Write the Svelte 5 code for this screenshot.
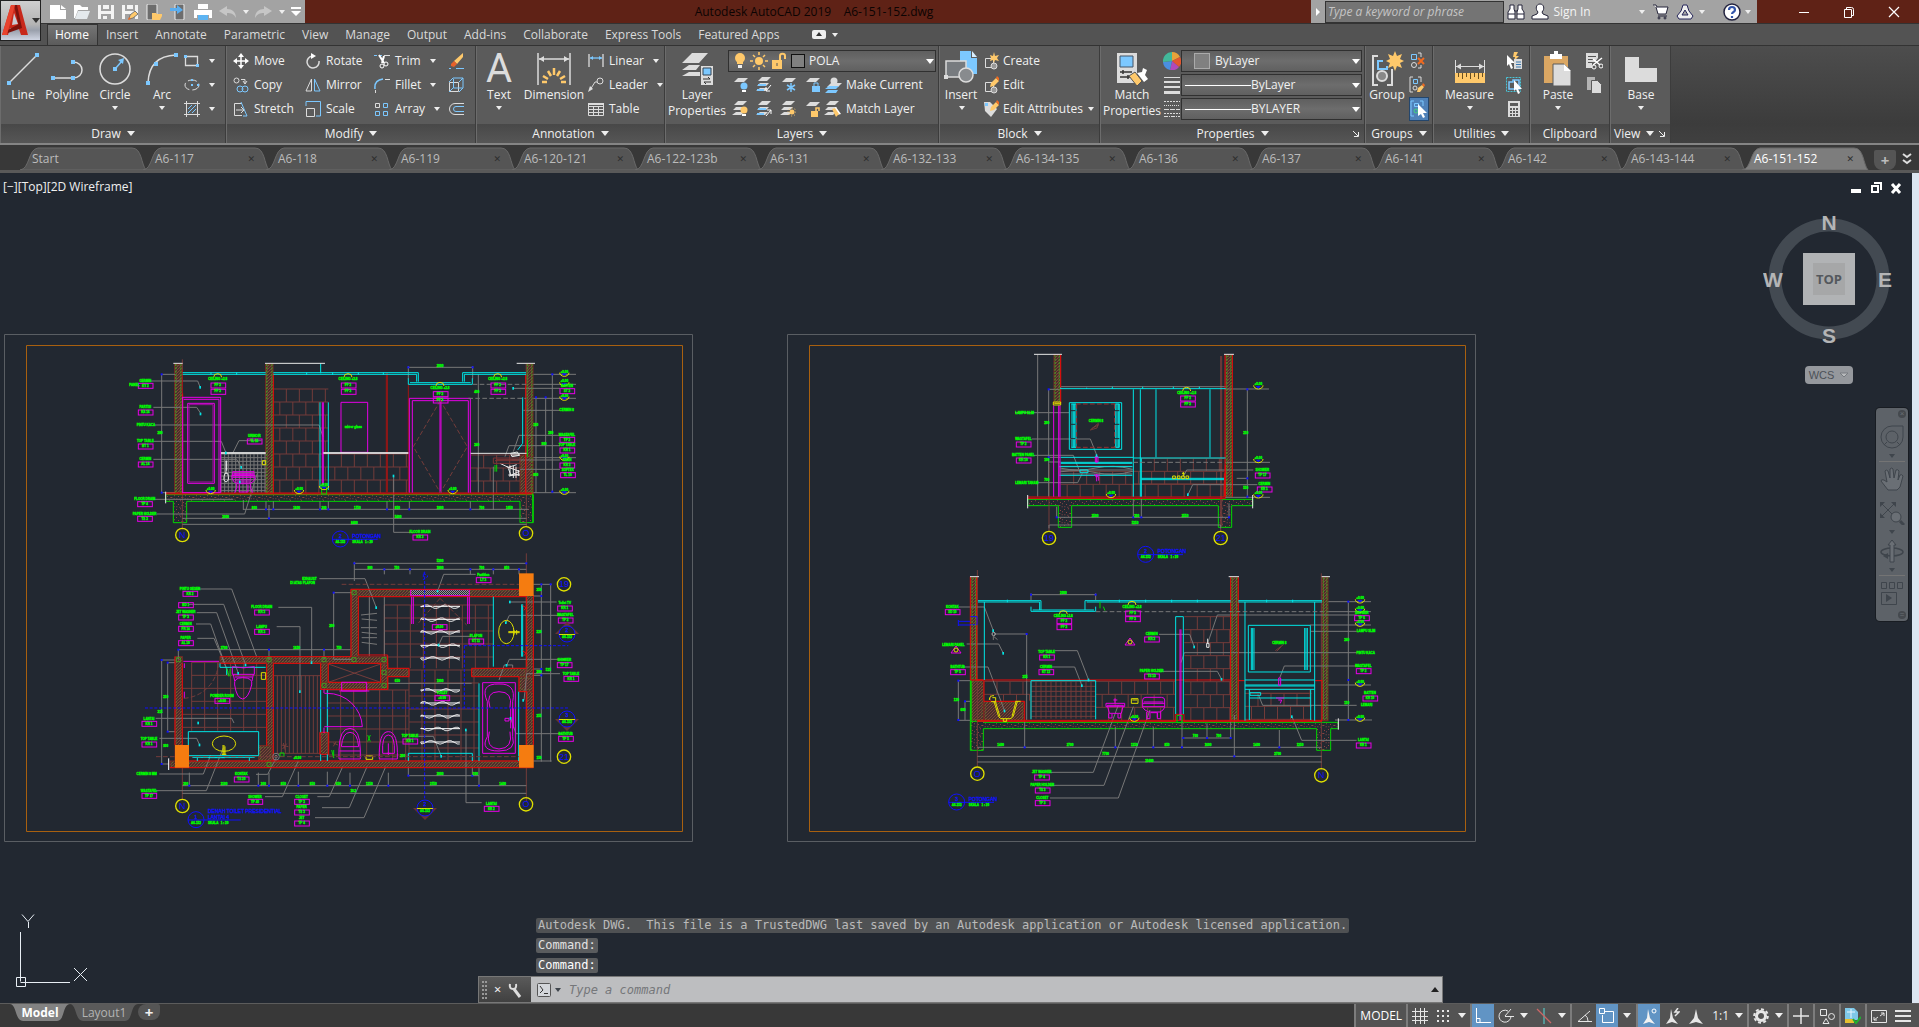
<script lang="ts">
    const W = '#dcdcdc';
    const B = '#7cc8ff';
    const Y = '#ffc96b';

    const menus = ['Home', 'Insert', 'Annotate', 'Parametric', 'View', 'Manage', 'Output', 'Add-ins', 'Collaborate', 'Express Tools', 'Featured Apps'];
    const files = ['Start', 'A6-117', 'A6-118', 'A6-119', 'A6-120-121', 'A6-122-123b', 'A6-131', 'A6-132-133', 'A6-134-135', 'A6-136', 'A6-137', 'A6-141', 'A6-142', 'A6-143-144', 'A6-151-152'];
    let activeMenu = 'Home';
    let activeFile = 'A6-151-152';
    let command = '';
    let keyword = '';

    const sheet = `<path fill="${W}" d="M6 1h10l-4 4H2z"/>`;
    const sheets = `<path fill="${W}" d="M6 0h9l-4 4H2zM4 6h9l-3 3H1zM4 11h8l-3 3H0z"/>`;

    // every icon: [width, height, svg body]
    const icons: Record<string, [number, number, string]> = {
        logo: [30, 34, `<path fill="#c8281a" d="M10 1h9l8 30h-7l-2-6-9-1-2 7H1z"/><path fill="#7e120c" d="M13 1h3l5 23-3-1zM3 28l15-8 3 4-17 6z"/><path fill="#c9ccd4" d="M13 9l4 11-6 1z"/><path fill="#e8432e" d="M10 1h4L6 31H1z"/>`],
        new: [18, 16, `<path fill="#fff" d="M1 1h10v5h6v9H1z"/><path fill="#fff" d="M12 1l5 4h-5z"/>`],
        open: [18, 16, `<path fill="#fff" d="M1 1h6l2 2h6v3H5L2 14H1z"/><path fill="#e4e9ec" d="M5 7h12l-3 8H2z"/>`],
        save: [18, 16, `<path fill="#f4f4f4" d="M1 1h3v6h10V1h3v14h-3v-5H4v5H1z"/><path fill="#f4f4f4" d="M6 1h6v4H6zM6 12h4v3H6z"/>`],
        saveas: [18, 16, `<path fill="#f4f4f4" d="M1 1h3v6h10V1h3v14h-3v-5H4v5H1zM6 1h6v4H6z"/><path fill="${Y}" stroke="#777" d="M8 15l1-4 5-4 3 3-5 4z"/><path fill="#f06a20" d="M7 16l1-3 2 2z"/>`],
        mobopen: [18, 16, `<rect x="2" width="10" height="16" rx="1" fill="#6d6d6d" stroke="#eee"/><path fill="${Y}" d="M7 9h4l1 1h5v2l-2 4H7z"/>`],
        mobsave: [18, 16, `<rect x="6" width="9" height="16" rx="1" fill="#6d6d6d" stroke="#eee"/><path fill="#5aaef0" d="M1 4h7V1l6 5-6 4V7H1z"/>`],
        print: [20, 16, `<path fill="#fff" d="M5 0h10v5H5zM1 6h18v8h-3v-3H4v3H1z"/><path fill="#5db4f2" d="M5 11h10v5H5z"/>`],
        undo: [18, 14, `<path fill="#c6c6c6" d="M0 6l8-5v3c5 0 9 3 9 9-2-4-5-5-9-5v3z"/>`],
        redo: [18, 14, `<path fill="#c6c6c6" d="M17 6L9 1v3c-5 0-9 3-9 9 2-4 5-5 9-5v3z"/>`],
        custom: [10, 10, `<path fill="#fff" d="M0 0h10v2H0zM0 4h10L5 9z"/>`],
        collapse: [14, 9, `<rect width="14" height="9" rx="2" fill="#eee"/><path fill="#333" d="M4 6l3-4 3 4z"/>`],
        binoc: [18, 16, `<path fill="#fff" stroke="#25253a" d="M3 1h4v4l1 3v7H1V8l2-3zM11 1h4v4l2 3v7h-7V8l1-3z"/><path stroke="#25253a" d="M1 10h7M10 10h7M8 7h2"/>`],
        person: [18, 17, `<path fill="#fff" stroke="#25253a" d="M6 11l1-2C4 6 5 1 9 1s5 5 2 8l1 2 5 2v3H1v-3z"/>`],
        cart: [17, 17, `<path fill="#fff" stroke="#25253a" d="M1 2h3l1 2h11l-2 7H6L4 4M6 13h9"/><circle cx="7" cy="15" r="1" stroke="#25253a"/><circle cx="13" cy="15" r="1" stroke="#25253a"/>`],
        a360: [20, 16, `<path fill="#eee" fill-rule="evenodd" stroke="#25255a" d="M8 1h4l2 6 4 5-2 3H4l-2-3 4-5zM10 6l-3 5h6z"/>`],
        help: [18, 18, `<circle cx="9" cy="9" r="8" fill="#fff" stroke="#23233f" stroke-width="1.5"/><path fill="none" stroke="#3355aa" stroke-width="2.2" d="M6 7c0-4 6-4 6 0 0 2-3 2-3 4v0M9 13v2"/>`],
        wmin: [14, 14, `<path stroke="#fff" d="M2 7.500h10"/>`],
        wmax: [14, 14, `<path fill="none" stroke="#fff" d="M2.500 4.500h7v8h-7zM4.500 4V2.500h5q2 0 2 2v6H10"/>`],
        wclose: [14, 14, `<path stroke="#fff" stroke-width="1.200" d="M2 2l10 10M12 2L2 12"/>`],
        line: [34, 34, `<path stroke="${W}" stroke-width="1.500" d="M3 31L31 3"/><path fill="${B}" d="M1 29h4v4H1zM29 1h4v4h-4z"/>`],
        pline: [34, 34, `<path fill="none" stroke="${W}" stroke-width="1.500" d="M3 26h20c12 0 12-16 0-16"/><path fill="${B}" d="M1 24h4v4H1zM21 24h4v4h-4zM21 8h4v4h-4z"/>`],
        circle: [34, 34, `<circle cx="17" cy="17" r="15" fill="none" stroke="${W}" stroke-width="1.500"/><path stroke="${B}" stroke-width="1.500" d="M17 17l7-8"/><path fill="${B}" d="M15 15h4v4h-4zM26 6l-1 6-5-4z"/>`],
        arc: [34, 34, `<path fill="none" stroke="${W}" stroke-width="1.500" d="M3 31Q4 4 31 3"/><path fill="${B}" d="M1 29h4v4H1zM9 10h4v4H9zM29 1h4v4h-4z"/>`],
        rect: [16, 14, `<path fill="none" stroke="${W}" stroke-width="1.300" d="M1.500 2.500h12v9h-12z"/><path fill="${B}" d="M0 1h3v3H0zM12 10h3v3h-3z"/>`],
        ellipse: [16, 14, `<ellipse cx="8" cy="7" rx="7" ry="5" fill="none" stroke="${W}" stroke-dasharray="9 3"/><path fill="${B}" d="M7 6h2v2H7zM7 1h2v2H7zM13 6h2v2h-2z"/>`],
        hatch: [16, 16, `<path fill="none" stroke="${W}" d="M0 2.500h16M0 13.500h16M2.500 0v16M13.500 0v16"/><path stroke="${B}" d="M4 8l4-4M4 12l8-8M8 12l4-4"/>`],
        move: [16, 16, `<path stroke="#fff" stroke-width="1.500" d="M8 2v12M2 8h12"/><path fill="#fff" d="M8 0l3 4H5zM8 16l3-4H5zM0 8l4-3v6zM16 8l-4-3v6z"/>`],
        rotate: [16, 16, `<path fill="none" stroke="${W}" stroke-width="1.500" d="M7 3a6 6 0 1 0 7 5"/><path fill="#fff" d="M6 0l5 3-5 3z"/>`],
        trim: [16, 16, `<path stroke="${B}" stroke-dasharray="3 2" d="M0 2.500h8"/><path stroke="${W}" d="M10 2.500h6"/><path stroke="#fff" stroke-width="2" d="M5 2l5 8M10 3L8 10"/><circle cx="8" cy="13" r="2" fill="none" stroke="#fff"/><circle cx="12" cy="11" r="2" fill="none" stroke="#fff"/>`],
        erase: [16, 16, `<path fill="${Y}" d="M15 0v4L9 11 6 8z"/><path fill="#e8622a" d="M6 8l3 3-3 3-3-1v-2z"/><path stroke="${B}" d="M1 15.500h2M8 15.500h8"/>`],
        copy: [16, 16, `<circle cx="3.500" cy="3.500" r="2.500" fill="none" stroke="${W}"/><path fill="none" stroke="${W}" d="M8 2.500h4V7M10 4l2 3 2-3"/><g fill="none" stroke="${B}"><circle cx="7" cy="12" r="3"/><circle cx="12" cy="12" r="3"/></g>`],
        mirror: [16, 16, `<path fill="none" stroke="${W}" d="M6.500 2v12H1z"/><path fill="none" stroke="${B}" d="M9.500 2v12H15z"/>`],
        fillet: [16, 16, `<path fill="none" stroke="${B}" stroke-width="1.500" d="M1 12Q0 3 9 2"/><path stroke="${W}" d="M11 2.500h5M1.500 13v3"/>`],
        cube: [16, 16, `<path fill="none" stroke="${W}" d="M1.500 5.500h9v9h-9z"/><path fill="none" stroke="${B}" d="M1 5l4-4h10v10l-4 4M11 5l4-4M5.500 2v9h9M1 15l4-4"/>`],
        stretch: [16, 16, `<path fill="none" stroke="${W}" d="M9 2.500H1.500v12H9M3 9h7M8 6l3 3-3 3"/><path fill="none" stroke="${B}" d="M8 1l6 14H10"/>`],
        scale: [16, 16, `<path fill="none" stroke="${B}" d="M1 5V.500h14.500V15H11"/><path fill="none" stroke="${W}" d="M1.500 7.500h8v8h-8z"/>`],
        array: [16, 16, `<path fill="none" stroke="${W}" d="M1.500 2.500h4v4h-4z"/><path fill="none" stroke="${B}" d="M9.500 2.500h4v4h-4zM1.500 10.500h4v4h-4zM9.500 10.500h4v4h-4z"/>`],
        offset: [16, 16, `<path fill="none" stroke="${W}" d="M16 2.500H7a5.500 5.500 0 0 0 0 11h9"/><path fill="none" stroke="${B}" d="M16 5.500H8a2.500 2.500 0 0 0 0 5h8"/>`],
        dim: [34, 34, `<path stroke="${W}" stroke-width="1.500" d="M1 1v32M33 1v32M2 7h30"/><path fill="${W}" d="M2 7l5-3v6zM32 7l-5-3v6z"/><path stroke="${Y}" stroke-width="2.500" d="M17 16v7M11 19l3 5M23 19l-3 5M6 24l5 3M28 24l-5 3M5 30h5M24 30h5"/>`],
        linear: [16, 16, `<path stroke="${W}" stroke-width="1.300" d="M1 1v13M15 1v13"/><path stroke="${B}" stroke-width="1.300" d="M2 5h12"/><path fill="${B}" d="M2 5l3-2v4zM14 5l-3-2v4z"/>`],
        leader: [16, 16, `<circle cx="12" cy="4" r="3" fill="none" stroke="${W}"/><path fill="none" stroke="${W}" d="M9 5H7L2 13"/><path fill="${W}" d="M0 15l2-6 3 3z"/>`],
        table: [16, 16, `<path fill="none" stroke="${W}" d="M.500 2.500h15v12H.500zM0 5.500h16M0 8.500h16M0 11.500h16M5.500 5v9M10.500 5v9"/><path fill="${W}" d="M0 2h16v2H0z"/>`],
        layers: [34, 34, `<path fill="${W}" d="M12 1h16l-9 10H2zM9 13h11l-4 5H2zM9 20h11v4H2z"/><path fill="${W}" d="M21 14h12v19H21z"/><path fill="${B}" stroke="#345" d="M23 16h8v7h-8z"/><path fill="none" stroke="#333" d="M23 27h7l-2-2M31 30h-7l2 2"/>`],
        bulb: [14, 18, `<circle cx="7" cy="6" r="5" fill="${Y}"/><path fill="${Y}" d="M4 8h6v4H4z"/><path fill="#eee" d="M5 13h4v3H5z"/>`],
        sun: [18, 18, `<circle cx="9" cy="9" r="4" fill="${Y}"/><path stroke="${Y}" stroke-width="1.500" d="M9 0v3M9 15v3M0 9h3M15 9h3M3 3l2 2M13 13l2 2M15 3l-2 2M3 15l2-2"/>`],
        unlock: [16, 18, `<path fill="${Y}" d="M1 8h10v9H1z"/><path fill="none" stroke="${Y}" stroke-width="2" d="M9 8V4c0-3 5-3 5 0v3"/><path stroke="#555" d="M6 11v3"/>`],
        l1: [16, 16, sheet + `<circle cx="12" cy="9" r="3.500" fill="${B}"/><path fill="#fff" d="M10 13h4v2h-4z"/>`],
        l2: [16, 16, sheets + `<path stroke="${B}" stroke-width="2" d="M1 13h7M2 8h8"/><path stroke="#fff" fill="none" d="M15 8l-5 6M10 10v4h4"/>`],
        l3: [16, 16, sheet + `<path stroke="${B}" stroke-width="1.500" d="M11 6v9M7 8l8 5M15 8l-8 5"/>`],
        l4: [16, 16, sheet + `<path fill="${B}" d="M8 9h8v6H8z"/><path fill="none" stroke="${B}" d="M10 9V6h4v3"/>`],
        l5: [18, 17, `<path fill="${W}" d="M7 6h11l-4 4H3z"/><circle cx="10" cy="4" r="3.500" fill="${W}"/><path fill="${B}" d="M5 9h10l-3 3H1zM4 13h10l-2 3H1z"/>`],
        l6: [16, 16, sheets + `<circle cx="12" cy="9" r="3.500" fill="${Y}"/><path fill="#fff" d="M10 13h4v2h-4z"/>`],
        l7: [16, 16, sheets + `<path stroke="${B}" stroke-width="2" d="M1 13h7M2 8h8"/><path stroke="#fff" fill="none" d="M10 15l5-6M11 9h4v4"/>`],
        l8: [16, 16, sheets + `<circle cx="12" cy="11" r="2.500" fill="${Y}"/><circle cx="12" cy="11" r="4" fill="none" stroke="${Y}" stroke-dasharray="1 2"/>`],
        l9: [16, 16, sheet + `<path fill="${Y}" d="M7 10h7v6H7z"/><path fill="none" stroke="${Y}" stroke-width="1.500" d="M12 10V7h3v3"/>`],
        l10: [18, 16, sheets + `<path fill="#fff" d="M9 8l3-2 5 7-4 1z"/><path fill="${Y}" d="M8 8l3-1 4 6-3 3z"/>`],
        insert: [34, 40, `<path fill="${B}" d="M16 2h11v7h6v16H16z"/><path fill="#d9efff" d="M28 2l5 6h-5z"/><path fill="#777b7f" stroke="${W}" stroke-width="1.500" d="M2 12h20v16H2z"/><circle cx="22" cy="26" r="7" fill="#888b8e" stroke="${W}" stroke-width="1.500"/><path fill="${W}" d="M0 26h4v4H0z"/>`],
        create: [16, 18, `<path fill="none" stroke="${W}" d="M2.500 6.500h8v9h-8z"/><circle cx="11" cy="14" r="3" fill="#999" stroke="${W}"/><path fill="${Y}" d="M11 0l1 4 4-1-2 3 2 3-4-1-1 3-1-3-3 1 1-3-1-3 3 1z"/>`],
        edit: [16, 18, `<path fill="none" stroke="${W}" d="M2.500 6.500h8v9h-8z"/><circle cx="11" cy="14" r="3" fill="#999" stroke="${W}"/><path fill="${Y}" d="M7 11l1-4 5-5 3 3-5 5z"/><path fill="#f06a20" d="M13 2l1-2 3 3-1 2z"/>`],
        attr: [16, 18, `<path fill="${W}" d="M1 2h6l7 7-6 8-6-6z"/><path fill="${B}" d="M2 3h3v3H2z"/><path fill="${Y}" d="M7 11l1-4 5-5 3 3-5 5z"/><path fill="#f06a20" d="M13 2l1-2 3 3-1 2z"/>`],
        match: [34, 34, `<path fill="${W}" d="M2 1h20v30H2z"/><path fill="${B}" stroke="#456" d="M5 4h13v11H5z"/><path stroke="#333" stroke-width="1.500" d="M5 20h12M5 25h12M8 18v4M13 23v4"/><path fill="${Y}" stroke="#555" d="M14 24l6-4 7 9-5 5z"/><path fill="#fff" d="M22 21l5-1 1-4 4 2-2 5 3 4-4 3z"/>`],
        wheel: [18, 18, `<path fill="#e9a23a" d="M9 9V0a9 9 0 0 1 8 5z"/><path fill="#e2572f" d="M9 9l8-4a9 9 0 0 1-1 10z"/><path fill="#b04ab8" d="M9 9l7 6a9 9 0 0 1-9 3z"/><path fill="#4a8fe0" d="M9 9l-2 9a9 9 0 0 1-7-8z"/><path fill="#42b89a" d="M9 9l-9 1A9 9 0 0 1 9 0z"/>`],
        weights: [16, 18, `<path fill="${W}" d="M0 1h16v1H0zM0 5h16v2H0zM0 10h16v2H0zM0 15h16v3H0z"/>`],
        types: [16, 16, `<path stroke="${W}" d="M0 .500h16M0 12.500h16" stroke-dasharray="2 1"/><path stroke="${W}" d="M0 4.500h16" stroke-dasharray="1 1"/><path stroke="${W}" d="M0 8.500h16" stroke-dasharray="5 1"/><path stroke="${W}" d="M0 15.500h16" stroke-dasharray="4 1 1 1"/>`],
        group: [34, 36, `<path fill="none" stroke="${W}" stroke-width="2" d="M8 5H3v29h5M17 34h5V18"/><path fill="none" stroke="${B}" stroke-width="2" d="M13 10H8v8h9v-3"/><circle cx="12" cy="25" r="5" fill="#888" stroke="${W}" stroke-width="2"/><path fill="${Y}" d="M25 0l2 5 5-2-2 5 4 2-4 2 2 5-5-2-2 5-2-5-5 2 2-5-4-2 4-2-2-5 5 2z"/>`],
        ungroup: [16, 18, `<path fill="none" stroke="${B}" d="M2.500 2.500h5v5h-5z"/><circle cx="5" cy="13" r="2.500" fill="none" stroke="${W}"/><path fill="none" stroke="${W}" d="M9 1h3v4M9 16h3v-3"/><path stroke="#f06a20" stroke-width="2" d="M9 6l6 6M15 6l-6 6"/>`],
        gedit: [16, 18, `<path fill="none" stroke="${W}" d="M4 1H1v15h3M9 1h3v5"/><path fill="none" stroke="${B}" d="M4.500 3.500h4v4h-4z"/><circle cx="6" cy="12" r="2" fill="none" stroke="${W}"/><path fill="${Y}" d="M8 16l1-4 4-3 2 2-4 5z"/><path fill="#f06a20" d="M13 9l1-2 2 2-1 2z"/>`],
        gsel: [18, 18, `<path fill="none" stroke="${B}" d="M4 1H1v15h3M10 1h3v5M4.500 3.500h4v3h-4z"/><circle cx="6" cy="11" r="2" fill="none" stroke="#45d080"/><path fill="#fff" d="M8 4l9 9h-4l2 4-2 1-2-4-3 2z"/>`],
        measure: [32, 34, `<path stroke="${W}" d="M1.500 8v16M30.500 8v16M2 14.500h28"/><path fill="${W}" d="M2 14.500l5-3v6zM30 14.500l-5-3v6z"/><path fill="${Y}" d="M1 21h30v10H1z"/><path stroke="#6a5020" d="M4.500 21v4M8.500 21v6M12.500 21v4M16.500 21v6M20.500 21v4M24.500 21v6M28.500 21v4"/>`],
        qsel: [18, 18, `<path fill="#fff" d="M2 3l8 8H6l2 5-2 1-2-5-2 2z"/><path fill="${Y}" d="M9 0h4l-2 4h3l-5 5 1-4H8z"/><path fill="${W}" d="M9 7h8v10H9z"/><path stroke="#3a78b0" d="M11 10h5M11 12.500h5M11 15h5"/>`],
        selall: [18, 18, `<path fill="none" stroke="#49c5d8" stroke-dasharray="2 1" d="M1.500 1.500h14v14h-14z"/><path fill="none" stroke="${B}" stroke-width="1.500" d="M4 6h4V4h6v9H4z"/><path fill="#fff" d="M9 4l8 9h-4l2 4-2 1-2-5-2 2z"/>`],
        calc: [14, 18, `<path fill="${W}" d="M1 1h12v16H1z"/><path fill="#5b5b5b" d="M3 3h8v3H3zM3 8h2v2H3zM6 8h2v2H6zM9 8h2v2H9zM3 11h2v2H3zM6 11h2v2H6zM9 11h2v2H9zM3 14h2v2H3zM6 14h2v2H6zM9 14h2v2H9z"/>`],
        paste: [32, 36, `<path fill="#dba763" d="M2 5h24v27H2z"/><path fill="#fff" d="M8 3h4V0h4v3h4v5H8z"/><path fill="${W}" stroke="#5b5b5b" d="M11 13h11l7 7v15H11z"/><path fill="#fff" d="M22 13l7 7h-7z"/>`],
        cut: [18, 18, `<path fill="${W}" d="M1 1h12v5l-3 4H7v6H1z"/><path stroke="#555" d="M3 4.500h8M3 7.500h6M3 10.500h4"/><path stroke="#fff" stroke-width="1.500" d="M8 13l9-7M8 7l7 6"/><circle cx="16" cy="14" r="2" fill="none" stroke="#fff"/><circle cx="9" cy="15" r="2" fill="none" stroke="#fff"/>`],
        copyclip: [16, 18, `<path fill="#b4b4b4" d="M1 1h8v13H1z"/><path fill="${W}" stroke="#5b5b5b" d="M5.500 4.500h6l4 4v9h-10z"/>`],
        base: [34, 34, `<path fill="${W}" d="M1 5h14v11h18v14H1z"/>`],
        diag: [8, 8, `<path fill="none" stroke="#eee" d="M1 1l5 5M6.500 2v4.500H2"/>`],
        wheelnav: [24, 24, `<path fill="none" stroke="#3f454c" d="M12 1h11v11a11 11 0 1 1-11-11z"/><circle cx="12" cy="12" r="6" fill="none" stroke="#3f454c"/><path stroke="#3f454c" d="M7 17l-3 3M17 17l3 3"/>`],
        hand: [24, 24, `<path fill="#6a6f75" stroke="#3f454c" d="M8 23l-7-9q0-2 3-1l3 2L5 4q1-2 3 0l2 7 0-9q2-2 3 0l1 9 2-8q2-1 3 1l-1 9 2-5q2-1 3 1l-3 11-3 3z"/>`],
        zoomnav: [26, 24, `<path stroke="#3f454c" d="M2 2l14 14M16 2L2 16"/><path fill="#3f454c" d="M1 1h5L1 6zM17 1v5l-5-5zM1 17v-5l5 5z"/><circle cx="17" cy="16" r="5" fill="#6a6f75" stroke="#3f454c"/><path stroke="#3f454c" stroke-width="3" d="M21 20l4 4"/>`],
        orbit: [24, 24, `<ellipse cx="12" cy="13" rx="11" ry="4" fill="none" stroke="#3f454c" stroke-width="1.500"/><path fill="#6a6f75" stroke="#3f454c" d="M10 23V6H8l4-5 4 5h-2v17z"/><path fill="#3f454c" d="M3 17l5-3v6z"/>`],
        motion: [24, 24, `<path fill="none" stroke="#3f454c" d="M1.500 1.500h5v6h-5zM9.500 1.500h5v6h-5zM17.500 1.500h5v6h-5zM1.500 11.500h15v12h-15z"/><path fill="#3f454c" d="M6 13l6 4-6 4z"/>`],
        wrench: [14, 16, `<path fill="none" stroke="#ddd" stroke-width="3" d="M6 7l6 8"/><path fill="none" stroke="#ddd" stroke-width="2" d="M2 2q-1 5 3 5t3-5"/>`],
        prompt: [14, 14, `<rect x=".500" y=".500" width="13" height="13" rx="1" fill="#d3d6da" stroke="#555"/><path fill="none" stroke="#333" d="M3 3l3 4-3 3M7 10.500h4"/>`],
        sgrid: [16, 16, `<path stroke="#e6e6e6" d="M0 3.500h16M0 8.500h16M0 12.500h16M3.500 0v16M8.500 0v16M12.500 0v16"/>`],
        ssnap: [16, 16, `<path stroke="#e6e6e6" stroke-width="2" stroke-dasharray="2 3" d="M1 3h13M1 8h13M1 13h13"/>`],
        sortho: [16, 16, `<path fill="none" stroke="#fff" d="M1.500 0v14.500H16M1 10.500h4V15"/>`],
        spolar: [16, 16, `<path fill="none" stroke="#e6e6e6" d="M10 3a6 6 0 1 0 3 5M7 8.500h9M7 8l6-7"/>`],
        siso: [16, 16, `<path stroke="#5bb" stroke-width="1.300" d="M8 0v16"/><path stroke="#c66" stroke-width="1.300" d="M1 1l14 14"/>`],
        strack: [16, 16, `<path fill="none" stroke="#e6e6e6" d="M14 3L2 13.500h14M9 7q3 2 3 6"/>`],
        sosnap: [16, 16, `<path fill="none" stroke="#fff" d="M6 3.500h8.500v11h-11V7M.500.500h5v5h-5z"/>`],
        sann: [16, 16, `<path fill="#f2f2f2" d="M7 1l2 9 5 6-6-2-6 2 4-6z"/><circle cx="13" cy="3" r="2" fill="none" stroke="#fff"/>`],
        sann2: [16, 16, `<path fill="#e6e6e6" d="M7 1l2 9 5 6-6-2-6 2 4-6z"/><path stroke="#e6e6e6" stroke-width="1.500" d="M14 0l-3 4h4l-4 4"/>`],
        sann3: [16, 16, `<path fill="#e6e6e6" d="M8 1l2 9 5 6-7-2-7 2 5-6z"/>`],
        gear: [16, 16, `<circle cx="8" cy="8" r="4.500" fill="none" stroke="#e6e6e6" stroke-width="3"/><circle cx="8" cy="8" r="6.800" fill="none" stroke="#e6e6e6" stroke-width="2" stroke-dasharray="3 2.300"/>`],
        plus: [16, 16, `<path stroke="#e6e6e6" stroke-width="1.500" d="M8 0v16M0 8h16"/>`],
        isolate: [16, 16, `<path fill="none" stroke="#e6e6e6" d="M1.500 1.500h6v6h-6zM4 15.500l3-5 3 5z"/><circle cx="12.500" cy="8.500" r="3" fill="none" stroke="#e6e6e6"/>`],
        perf: [16, 16, `<path fill="#7ec8e8" d="M0 0h9l4 4v8H0z"/><path stroke="#e8f6ff" d="M2 4h8M6 1v9"/><path fill="#e6c030" d="M0 11h9v4H0z"/><path fill="none" stroke="#20b030" stroke-width="2" d="M8 11l3 4 5-6"/>`],
        full: [16, 16, `<path fill="none" stroke="#e6e6e6" d="M.500 2.500h15v12H.500zM10 5h3v3M13 5L9 8M3 9v3h3M3 12l4-3"/>`],
        lines: [16, 16, `<path stroke="#e6e6e6" stroke-width="2" d="M0 3h16M0 8h16M0 13h16"/>`],
    };

    // ---- model space -------------------------------------------------
    // drawing units are a third of a pixel, measured from each view's corner
    const GREY = '#777777', BROWN = '#743c3a', RED = '#e60a0a', GREEN = '#00d800', CYAN = '#00e6e6', MAG = '#e600e6', BLUE = '#1010ff', YEL = '#e0e000', WHITE = '#e8e8e8', MOSS = '#3f9a22';

    const bricks = (x: number, y: number, w: number, h: number, bw = 39, bh = 39) => {
        let d = '';
        for (let j = 0; j * bh < h; j++) {
            const top = y + j * bh;
            d += `M${x} ${top}h${w}`;
            for (let i = (j % 2 ? bw / 2 : bw); i < w; i += bw) d += `M${x + i} ${top}v${Math.min(bh, y + h - top)}`;
        }
        return d;
    };
    const grid = (x: number, y: number, w: number, h: number, sx: number, sy: number) => {
        let d = '';
        for (let i = 0; i <= w; i += sx) d += `M${x + i} ${y}v${h}`;
        for (let j = 0; sy && j <= h; j += sy) d += `M${x} ${y + j}h${w}`;
        return d;
    };
    const box = (x: number, y: number, w: number, h: number) => `M${x} ${y}h${w}v${h}h${-w}z`;
    // jagged strip of overlapping text down the middle of the plan
    const scribble = (y: number) => {
        let d = `M902 ${y - 1}h118M902 ${y}`;
        for (let i = 1; i < 40; i++) d += `L${902 + i * 3} ${y + Math.round(Math.sin(i * 12.9 + y) * 5)}`;
        return d;
    };

    type View = {
        x: number; y: number;
        walls: number[][]; slabs: string[]; solid?: number[][];
        lines: [string, string][]; dashes: [string, string][];
        tags: [number, number, string, string][];
        notes: [number, number, string][];
        levels: number[][]; ceilings: number[][]; dots: number[][];
        ends: number[][];
        bubbles: [number, number, string][];
        title: [number, number, string, string, number];
    };

    const views: View[] = [
        {
            x: 120, y: 340,
            walls: [[164, 72, 22, 388], [437, 72, 22, 388], [1219, 72, 20, 388], [1200, 345, 38, 115]],
            slabs: ['M137 464H1240V548H1200V484H200V548H160V484H137z'],
            lines: [
                [BROWN, bricks(460, 147, 165, 312) + bricks(625, 342, 240, 117) + bricks(1052, 345, 148, 114) + 'M187 58V570M1219 70V560'],
                [GREY, grid(303, 342, 134, 116, 11, 11)],
                [GREY, 'M125 103V460M125 103H165M125 458H165M370 508H1225M187 535H1220M187 553H1220M370 480v30M438 484v26M447 495v40M460 484v26M600 484v26M625 484v26M801 484v26M868 484v26M1051 484v26M1120 380v130M1075 103V458M865 82H1058M865 78v40M1058 78v40M1240 103H1368M1240 133H1368M1240 175H1368M1240 353H1368M1240 458H1368M1248 172V458M1277 172V458M1297 103V458'],
                [GREY, 'M60 123H233l8 20M100 202H230l12 18M105 255H597l12 35M100 304H304l14 35M100 358H350l14 24M110 522H374L412 400M100 478H340M425 302H357L338 340M821 410V577H880M1180 145H1320M1210 211H1320M1197 286H1345M1197 286L1180 335M1167 317H1320M1167 317L1155 350M1175 360H1320M1200 388H1320'],
                [RED, 'M137 459H1240M137 462H1240M188 160V460M460 100V460M1217 103V460'],
                ['#a01414', 'M799 98V457M802 98V457M865 132V457M187 90v70'],
                [CYAN, 'M188 98H437M188 103H437M460 98H895V125M460 103H890V125M602 70v30M865 115v18H1057V115M870 128H1052M1028 125V98H1218M1033 125V103H1218M600 187V445M625 187V450M1208 172V310M1208 310l-15 20M273 97v8M350 97v8M560 97v8M638 97v8M715 97v8M790 97v8'],
                [MAG, 'M186 172H302V458M191 178H297V458M186 458H302M188 172V456' + box(203, 190, 80, 240) + box(663, 187, 80, 150) + 'M607 187V435M610 187V435M868 175H1051V458M868 175V458M877 182H1045V458M877 182V458M960 182V458M963 182V458'],
                ['#a010a0', box(207, 194, 72, 232)],
                [MAG, 'M338 395h64v12h-64zM335 407h70v10q-5 12-20 14h-30q-15-2-18-14zM350 431v12l-6 15M392 431v12l6 15M358 434v22h26v-22M340 400h60M340 404h60M338 412h66M345 420h50M350 426h40'],
                [WHITE, 'M160 70H188M435 70H615M1190 70H1245M137 455v35M303 340H437M610 340H865M1052 340H1220M318 362v38M315 400q-8 22 3 26q12-4 5-26zM320 362v30M303 338H437M610 338H865'],
                [WHITE, 'M1140 370l25 12 25-8M1165 385l8 22M1160 380l38 14-30 14 30-6M1172 340l20-4 6 10-22 4zM1165 405h35M1170 376v30M1180 378v36M1188 380v34M1196 390v18M1176 345h24'],
                [GREEN, 'M1238 460V548M605 440h15v22h-15zM1125 375v20M1130 375v20M1222 300v50'],
                ['#803434', 'M1120 354h80v16h-80zM1125 362h70M1130 358h66'],
                [YEL, 'M427 362h10v12h-10z'],
            ],
            dashes: [[BROWN, 'M961 182L880 320L961 458L1042 320Z'], [GREY, 'M1058 133H1218M1045 175H1218'], [MOSS, 'M167 72V460M183 72V460M440 72V460M456 72V460M1236 72V460M1222 72V300']],
            solid: [],
            tags: [[76, 122, 'CERMIN', 'KY 2'], [76, 202, 'PARTISI', 'KA 14'], [76, 304, 'TOP TABLE', 'BT 1'], [76, 358, 'CERMIN', 'AL 14'], [74, 477, 'FLOOR DRAIN', 'TP 4'], [74, 521, 'PAPER HOLDER', 'TS 3'], [403, 289, 'URINOIR', 'TL 16'], [900, 577, 'FLOOR DRAIN', 'KR 3'], [1341, 138, 'BATTEN', 'ST 2'], [1341, 284, 'WASTAFEL', 'TP 2'], [1341, 316, 'TOP TABLE', 'KR 1'], [1341, 361, 'KRAN', 'KR 2'], [1343, 390, 'SOFTEX', 'TL 10']],
            notes: [[50, 255, 'PINTU KACA'], [28, 136, 'PANEL'], [700, 260, 'mirror glass'], [1340, 211, 'CERMIN 8'], [403, 503, '800'], [530, 503, '1600'], [612, 503, '300'], [712, 503, '1750'], [832, 503, '850'], [960, 503, '1900'], [1085, 503, '700'], [1168, 503, '1050'], [317, 530, '3000'], [834, 530, '5400'], [703, 548, '8400'], [960, 77, '2000'], [1247, 255, '180'], [1272, 313, '900'], [1292, 280, '280'], [1070, 155, '400'], [1070, 315, '240'], [120, 280, '280'], [1247, 405, '900']],
            levels: [[1333, 98], [1333, 127], [1333, 170], [1333, 350], [1333, 452], [272, 450], [537, 450], [998, 450], [612, 438]],
            ceilings: [[293, 112], [684, 112], [1133, 112], [960, 138]],
            dots: [[125, 103], [125, 458], [447, 535], [438, 508], [460, 508], [600, 508], [625, 508], [801, 508], [868, 508], [1051, 508], [865, 82], [1058, 82], [1248, 172], [1277, 172], [1297, 103], [1297, 455]],
            ends: [[241, 142], [242, 222], [318, 339], [364, 382], [821, 408], [1180, 145], [360, 426]],
            bubbles: [[187, 585, 'N'], [1218, 580, 'O']],
            title: [661, 597, '2', 'POTONGAN', 50],
        },
        {
            x: 120, y: 545,
            walls: [[693, 133, 180, 22], [1048, 133, 172, 22], [693, 133, 22, 212], [300, 335, 503, 20], [165, 335, 22, 330], [440, 335, 20, 313], [602, 355, 22, 78], [782, 355, 22, 78], [602, 412, 202, 21], [803, 370, 64, 25], [1055, 370, 165, 25], [1218, 150, 22, 500], [1197, 395, 42, 44], [150, 648, 1090, 20], [416, 602, 40, 48], [600, 562, 26, 66]],
            slabs: [],
            solid: [[1197, 85, 44, 68], [165, 600, 42, 68], [1197, 600, 44, 68]],
            lines: [
                [BROWN, grid(793, 180, 327, 190, 39, 39) + grid(867, 375, 210, 272, 39, 39) + grid(623, 435, 244, 212, 39, 39) + grid(215, 352, 224, 205, 39, 39) + grid(460, 392, 138, 233, 12, 0) + 'M460 392h140M460 625h140M625 357L782 412M782 357L625 412M187 430h30M187 508h30M187 547h30M1219 25V770M187 668V765'],
                [GREY, 'M703 55H1219M703 73H1219M703 50v58M793 70v18M870 70v18M1051 70v18M1120 70v18M1197 70v18M748 155V333M793 155V333M641 143V343M641 143h55M641 343h55M175 314H693M175 314v30M447 314v30M612 314v30M125 345V657M143 353V560M125 345h40M143 560h22M143 353h22M125 657h22'],
                [GREY, 'M187 722H1219M187 745H1219M208 683v40M415 683v40M447 683v40M535 680v44M622 680v44M690 683v40M805 683v40M1077 665v58M865 692H1077M865 665v28M1057 665v28M803 415H1055M1264 118V650M1292 118V650M1240 118H1295M1240 153h25M1240 372h25M1240 391h25M1240 648h55M723 210l48-5M723 248h48M725 262l46 5M725 278h46M725 292l46 6M725 222l46 4'],
                [GREY, 'M598 101H735L769 188M232 132H335L410 335M207 178H311L377 360M230 203H290L355 385M228 237H272L326 390M232 280H282l42 100M475 187H575V352M470 245H540V440M107 520h228l7 14M118 580H230l9 20M118 687H250L272 630M108 737H259L310 608M408 688H443L468 640M435 755H487L535 648M592 755H628L668 665M606 788H688L741 665M585 818H732L797 665M895 574H940l24 60M1038 555V773H1085M1067 88H971L953 138M1055 274H968l-12 26M1170 171H1310M1335 211H1168l-10 22M1335 343H1168l-8 18M1320 386H1220l-8 80M1325 566H1188L1172 520M1137 405l16-45h25v10'],
                [RED, 'M693 133H1197M693 133V335M715 155V330H803V370H867V395H803V433H602V355M715 155H1220V365M1055 370H1220M1055 370V395H1197V440H1220V648M300 335H693M165 335V600M187 648H1197M150 668H1240M460 355H602M440 355V602M460 355V648M625 355H782V412H625zM300 355h137M1240 150V600M600 562h26v66h-26zM187 355V600'],
                [CYAN, box(205, 560, 211, 72) + 'M217 637H404M232 638v10M388 638v10M265 638h50M300 355v12H437M865 648V625H1057V648M1077 415V648M1196 440V648M1120 155V365M1208 178V335M1205 178V335M602 435V562M622 435V562M602 628v20M622 628v20M320 370v20'],
                [MAG, 'M190 349H297M193 355v14M193 440v20M875 155V237M880 155V237M1043 155V237M1048 155V237M613 445h8A105 105 0 0 1 727 545M613 545H727M612 434v10M612 548v16' + box(1088, 413, 98, 212) + 'M1102 525V470Q1078 415 1137 417Q1190 415 1178 470V575Q1190 618 1137 618Q1078 618 1102 575zM1110 488Q1095 440 1137 440Q1180 440 1170 488M1108 560Q1095 610 1137 612Q1180 610 1170 560M1172 490v60M1180 490v60M1155 520h12v8h-12z'],
                [MAG, 'M337 365Q370 372 403 365V388H337zM340 388l4 20M400 388l-4 20M368 398Q400 398 395 420Q385 460 368 462Q350 460 344 420Q340 398 368 398M345 396h52M657 642V615Q658 550 690 550Q720 550 721 615V642zM664 605Q668 562 690 562Q712 562 716 605zM658 618h62M778 642Q775 560 805 560Q835 560 832 642zM788 625Q785 570 805 570Q826 570 823 625zM805 595v35M665 412h75v26h-75zM658 438h90M800 625h12'],
                [YEL, 'M277 596a35 23 0 1 0 70 0a35 23 0 1 0-70 0M312 600v30M309 600v30M315 604v24M305 628h14M1136 261a23 35 0 1 0 46 0a23 35 0 1 0-46 0M1165 260h34M1165 263h34M1182 255v14M1190 255v14M424 383h13v20h-13zM738 633h20v10h-20z'],
                [MOSS, 'M169 338h12v12h-12zM441 338h12v12h-12zM606 338h12v12h-12zM606 415h12v12h-12zM786 415h12v12h-12zM786 338h12v12h-12zM696 137h12v12h-12zM696 338h12v12h-12zM786 376h12v12h-12zM441 652h12v12h-12z'],
                [GREEN, 'M480 624h12v10h-12zM320 370l6 24M330 372v22M743 570l8 20M751 570l-8 20M635 615l6 24M641 615v24'],
                ['#ffffff', [185, 224, 262, 302, 340, 436, 475, 514, 552, 592].map(scribble).join('') + 'M146 640v35'],
                [RED, 'M1208 182l10 6-6 8M1208 318l10 6-6 8'],
                [BROWN, 'M485 600l20 5M490 594l6 22M500 596l-12 16M640 594l14 6M648 590l-8 14'],
                [GREY, 'M458 635a10 10 0 1 0 20 0a10 10 0 1 0-20 0M464 635a4 4 0 1 0 8 0a4 4 0 1 0-8 0'],
            ],
            dashes: [[BROWN, 'M295 355A110 110 0 0 1 190 460M665 118H1197M108 635H165M207 635H1197M960 160L890 240M960 160L1040 240'], [BLUE, 'M914 80V760M75 489H1345M1033 302H1345M1033 302V489M910 84l14 10-14 10z']],
            tags: [[210, 131, 'PINTU GESER', 'KR 2'], [197, 165, '', 'BD 1'], [197, 202, 'JET WASHER', 'TP 3'], [197, 236, 'CERMIN', 'FR 14'], [197, 279, 'PAPER', 'AL 10'], [425, 187, 'FLOOR DRAIN', 'KR 2'], [425, 245, 'LAMPU', 'KR 3'], [87, 521, 'LANTAI', 'KR 1'], [87, 583, 'TOP TABLE', 'KR 1'], [364, 688, 'KONTAK', 'TS 20'], [87, 737, 'WASTAFEL', 'TP 17'], [405, 755, 'SHOWER', 'TP 40'], [545, 755, 'CLOSET', 'TP 3'], [545, 787, 'PAPER', 'TS 3'], [545, 820, 'JET', 'TP 4'], [870, 574, 'TOP TABLE', 'KR 1'], [1114, 776, 'LANTAI', 'KR 2'], [1090, 90, 'Partition', 'LT 3'], [1068, 274, 'PLAFON', 'KT 11'], [1334, 175, 'Toilet TV', 'KR 1'], [1336, 211, 'WASTAFEL', 'TP 2'], [1333, 345, 'SHOWER', 'TP 17'], [1353, 386, 'TOP TABLE', 'KR 1'], [1337, 566, 'BATHTUB', 'TP 5'], [306, 452, 'POWDER ROOM', '+0.00'], [966, 444, 'TOILET', '+0.00'], [958, 231, '', '+0.00']],
            notes: [[568, 101, 'EXHAUST'], [548, 113, 'DI ATAS PLAFON'], [80, 687, 'CERMIN 8 MM'], [960, 49, '5200'], [750, 68, '900'], [830, 68, '750'], [960, 68, '1800'], [1085, 68, '700'], [1160, 68, '850'], [635, 243, '200'], [312, 308, '2700'], [530, 308, '1650'], [657, 308, '750'], [120, 500, '315'], [137, 455, '210'], [137, 603, '900'], [832, 409, '650'], [960, 409, '1900'], [960, 688, '2000'], [1066, 688, '200'], [312, 718, '2100'], [430, 718, '300'], [490, 718, '850'], [577, 718, '850'], [655, 718, '650'], [748, 718, '1150'], [940, 718, '2750'], [1148, 718, '1400'], [197, 718, '200'], [700, 739, '10.2'], [1257, 135, '350'], [1257, 262, '220'], [1257, 512, '255'], [1285, 375, '525'], [532, 640, '+0.00'], [848, 634, '200'], [1257, 382, '200'], [1257, 640, '150']],
            levels: [], ceilings: [],
            dots: [[703, 55], [1219, 55], [793, 73], [870, 73], [1051, 73], [1120, 73], [1197, 73], [175, 314], [447, 314], [612, 314], [641, 143], [125, 345], [143, 353], [143, 560], [125, 657], [208, 722], [415, 722], [447, 722], [535, 722], [622, 722], [690, 722], [805, 722], [1077, 722], [865, 692], [1057, 692], [1264, 118], [1264, 153], [1264, 372], [1264, 391], [1292, 118]],
            ends: [[769, 188], [377, 360], [355, 385], [575, 353], [540, 440], [235, 534], [239, 600], [964, 634], [1038, 555], [953, 138], [956, 300], [1170, 171], [1158, 233], [1160, 361], [1210, 466], [1172, 520]],
            bubbles: [[1332, 118, '19'], [1332, 635, '21'], [187, 783, 'N'], [1218, 778, 'O']],
            title: [228, 824, '1', 'DENAH TOILET PRESIDENTIAL', 72],
        },
        {
            x: 920, y: 340,
            walls: [[402, 44, 20, 146], [917, 44, 20, 426]],
            slabs: ['M323 478H998V497H935V562H895V497H455V562H415V497H323z'],
            lines: [
                [BROWN, bricks(664, 355, 248, 38) + bricks(422, 394, 490, 77, 39, 39) + 'M640 432H912M387 372V575M902 48V575M905 48V560M511 270l24-20-4 14zM515 266l22-12'],
                [GREY, 'M353 44V470M386 148V470M386 148h35M386 352h35M386 366h35M982 148V470M915 147H1047M915 367H1050M915 472H1050M950 415h32M422 140H917M388 555H902M410 532H927M410 500v32M640 475v58M664 475v58M927 490v44M387 555v10M902 555v10'],
                [GREY, 'M285 218H447M335 297H511l19 48M342 346H460l18 46M350 428H473l14-28M1000 390H800l-10 20M1012 434H818l-14 30M418 384q60 12 110 0t110 4M418 396q60-10 110 2t110-4M418 379H637M418 402H637M418 390H637'],
                [RED, 'M323 471H917M323 475H917M422 44V190M915 44V470M937 44V470M916 375V470M913 400V470'],
                [CYAN, 'M422 146H917M422 143v4M500 143v4M577 140v6M668 140v6M760 140v6M838 140v6M640 148V470M661 148V470M664 355V470M708 148V352M870 148V352M640 354H917M422 352H640M422 367H637M422 370H637M418 380H637M418 406H637M664 415H912M664 419H912' + box(448, 188, 157, 140) + 'M454 192H468V322H454M456 192V322M460 192V322M464 192V322M587 192V322M591 192V322M595 192V322M586 192H598V322H586M480 390h24v8h-24z'],
                [MAG, 'M401 196V470M416 196V470M420 196V470M526 350h8v16h-8zM530 345v22M522 405h18M526 410h10v12M530 402v22'],
                [WHITE, 'M342 43H426M912 43H942M323 465v40M998 465v40'],
                [YEL, 'M400 186h22v9h-22zM403 190h18M758 408h8v8h-8zM772 408h8v8h-8zM785 408h8v8h-8zM798 408h8v8h-8zM790 396v12M786 400h8'],
            ],
            dashes: [[GREY, 'M640 367H912'], ['#993030', 'M468 192H586M468 322H586M470 192V322M584 192V322'], ['#222831', 'M452 212H470M452 253H470M452 296H470M584 212H600M584 253H600M584 296H600'], [MOSS, 'M405 46V186M418 46V186M920 46V470M933 46V470']],
            tags: [[310, 298, 'WASTAFEL', 'TP 2'], [310, 346, 'BATTEN PANEL', 'KR 10'], [1027, 391, 'SHOWER', 'TP 17'], [1033, 433, 'CERMIN', 'KR 1'], [803, 160, '', 'PF 2'], [803, 178, '', 'PF 2']],
            notes: [[314, 218, 'LAMPU SLIM'], [320, 428, 'LEMARI TANAM'], [528, 244, 'CERMIN 8'], [525, 527, '2500'], [650, 527, '200'], [795, 527, '2550'], [645, 548, '5250'], [380, 248, '200'], [977, 280, '210'], [380, 420, '700'], [380, 360, '100'], [977, 443, '550']],
            levels: [[1015, 136], [1015, 357], [1015, 463], [573, 462]],
            ceilings: [[800, 153]],
            dots: [[386, 148], [410, 532], [640, 532], [664, 532], [927, 532], [982, 148], [982, 415], [982, 470], [386, 352]],
            ends: [[530, 347], [804, 464]],
            bubbles: [[387, 594, '19'], [902, 594, '21']],
            title: [677, 643, '2', 'POTONGAN', 50],
        },
        {
            x: 920, y: 560,
            walls: [[153, 52, 18, 308], [153, 360, 38, 124], [932, 52, 22, 430], [1206, 52, 18, 430], [192, 424, 120, 60]],
            slabs: ['M192 487H1255V506H1232V571H1190V506H190V571H151V362H153V484H192z'],
            lines: [
                [BROWN, grid(333, 364, 194, 112, 15, 15) + bricks(527, 364, 238, 116) + bricks(793, 170, 139, 312, 39, 39) + bricks(192, 364, 140, 58) + bricks(975, 400, 200, 80) + 'M172 30V620M1204 40V630M989 388H1170v12H989z'],
                [GREY, 'M333 104H527M333 100v20M527 100v20M115 362V480M135 424V480M115 362h35M115 481h35M135 424h15M222 222H320V480M172 562H1205M172 589H1205M172 606H1205M314 484v78M586 500v62M700 500v62M786 484v78M790 534H932M861 490v44M932 484v50M943 465V589M1078 510v52M1285 125V480M1225 125H1353M1225 155H1353M1170 195H1353M1225 375H1353M1245 480H1356'],
                [GREY, 'M115 141H193L220 212M140 252H236l14 28M130 321H204l50 132M405 272H472L506 360M395 321H464l22 56M717 223H809l14 38M1310 165H892L863 250M717 334H892l13 24M1310 278H793l-10 30M1310 214H1172M1310 318H1093l-14 36M1310 436H1028l-12-30M1310 541H1145L1116 470M388 637H520L595 435M388 676H552L640 440M390 714H595L690 450'],
                [RED, 'M151 50V360M170 50V360H932M192 362V424H314V484M151 360H190M172 481H1206M172 484H766M790 484H1206M932 52V482M955 52V482M1206 360V482M766 463h26v22M766 463v22M955 362H975M1184 362H1206'],
                [CYAN, 'M174 122H363V150M174 126H359V150M495 150V122H932M500 126H932M955 122H1206M955 126H1206M333 140v14H527V140M338 150H522M193 126V360M975 126V482M1184 126V482M767 170V462M790 170V462M767 170H790M975 360H1184M975 375H1184M975 378H1184M988 388V480M1172 388V480M975 388H1184M988 414H1172M333 362H527M333 362V478M527 362V478' + box(985, 196, 186, 140) + 'M994 204V330M998 204V330M1002 204V330M1154 204V330M1158 204V330M1162 204V330M990 398h32v8h-32zM262 119v8M598 119v8M677 119v8M755 119v8M832 119v8M1040 119v8M1118 119v8'],
                [MAG, 'M780 208V480M783 208V480M1076 354h6v22h-6zM1068 414h24M1075 420h10l-4 10M558 430h56v10h-56zM562 436h48l-6 24h-36zM566 460v14h10v-12M602 460v14h-8v-12M585 415v15M580 420h12M668 420q0-8 10-8h46q10 0 10 8v22q-4 10-14 14h-34q-12-4-18-14zM668 430h66M672 426h58M668 440h66M680 456v20h10v-18M722 456v20h-10v-18M692 458h20v14'],
                [WHITE, 'M150 50H177M926 50H957M1205 50H1230M1255 475v34M863 236v14M860 250h7v12h-7z'],
                [GREEN, 'M153 362V571M771 466h15v22h-15zM540 125v20M550 140l5 12'],
                [YEL, 'M222 424l14 46q4 6 10 6h24q8-2 10-8l12-44M208 420q0-14 14-13M213 425h14v-12h-10M286 424h16M634 416h20v14h-20zM637 420h14M250 476v8h10v-8M226 424l14 46M288 424l-12 46'],
                [BLUE, 'M115 184H151M115 195H151M151 170h20v24h-20M115 180v18'],
                ['#aaaaaa', 'M216 222a5 5 0 1 0 10 0a5 5 0 1 0-10 0'],
                [BROWN, 'M1066 272l24-18M1070 274l14-14'],
            ],
            dashes: [[GREY, 'M527 155H1225M220 226v20M222 230l14 12'], [MOSS, 'M936 52V482M950 52V482M1210 52V482M1221 52V482M156 52V360M167 52V360']],
            tags: [[97, 141, 'KONTAK', 'SD 10'], [113, 321, 'BATHTUB', 'TP 5'], [380, 277, 'TOP TABLE', 'KR 1'], [378, 321, 'CERMIN', 'KT 12'], [695, 223, 'CERMIN', 'KR 2'], [695, 334, 'PAPER HOLDER', 'TS 13'], [365, 637, 'JET WASHER', 'TP 4'], [367, 676, 'PAPER HOLDER', 'TS 3'], [367, 714, 'CLOSET', 'TP 3'], [432, 168, '', 'PF 2'], [432, 186, '', 'PF 2'], [638, 145, '', 'PF 2'], [638, 162, '', 'PF 3'], [1325, 159, 'SHOWER', 'TP 6'], [1330, 318, 'WASTAFEL', 'TP 2'], [1350, 400, 'BATTEN', 'KR 10'], [1330, 541, 'LANTAI', 'KR 1']],
            notes: [[100, 254, 'LEMARI PANEL'], [1338, 214, 'LAMPU SLIM'], [1337, 278, 'PINTU KACA'], [1340, 436, 'LEMARI'], [1078, 250, 'CERMIN 8'], [430, 98, '2000'], [242, 556, '1400'], [450, 556, '2700'], [643, 556, '1150'], [741, 556, '850'], [864, 556, '1600'], [1010, 556, '1400'], [1140, 556, '1250'], [826, 527, '700'], [896, 527, '700'], [557, 583, '7700'], [1073, 583, '2700'], [688, 602, '10400'], [109, 420, '120'], [129, 450, '600'], [315, 350, '255'], [1280, 240, '240'], [1280, 428, '110']],
            levels: [[1320, 118], [1320, 146], [1320, 188], [1320, 368], [1320, 473], [643, 473]],
            ceilings: [[430, 163], [636, 135]],
            dots: [[333, 104], [527, 104], [115, 362], [115, 480], [135, 424], [320, 222], [314, 562], [586, 562], [700, 562], [786, 562], [1078, 562], [943, 589], [790, 534], [932, 534], [861, 534], [1285, 125], [1285, 360], [1285, 480]],
            ends: [[220, 212], [250, 280], [254, 453], [506, 360], [486, 377], [823, 261], [905, 358], [1116, 470]],
            bubbles: [[172, 641, 'O'], [1204, 646, 'N']],
            title: [110, 726, '3', 'POTONGAN', 50],
        },
    ];

    // section marks on the plan (last value: 1 points down), triangular marks on the elevation
    const sections: [number, number, string, number][] = [[567, 634, '2', -1], [567, 719, '3', 1], [425, 808, '2', 1]];
    const triangles = [[956, 650], [1130, 642]];
</script>

{#snippet icon(name: string)}
    <svg class="icon" width={icons[name][0]} height={icons[name][1]} viewBox="0 0 {icons[name][0]} {icons[name][1]}" fill="none" aria-hidden="true">{@html icons[name][2]}</svg>
{/snippet}

{#snippet big(name: string, label: string, drop: boolean)}
    <button class="big">
        <span class="pic">{@render icon(name)}</span>
        <span>{label}</span>
        {#if drop}<i class="caret"></i>{/if}
    </button>
{/snippet}

{#snippet small(name: string, label: string, drop: boolean)}
    <button class="small" aria-label={label || name}>
        <span class="slot">{@render icon(name)}</span>
        {#if label}<span>{label}</span>{/if}
        {#if drop}<i class="caret"></i>{/if}
    </button>
{/snippet}

{#snippet foot(label: string, drop: boolean, launch: boolean)}
    <div class="foot">
        <span>{label}</span>
        {#if drop}<i class="caret wide"></i>{/if}
        {#if launch}<span class="launch">{@render icon('diag')}</span>{/if}
    </div>
{/snippet}

<div class="app">
    <header>
        <button class="appmenu" aria-label="Application menu">{@render icon('logo')}<i class="caret dark"></i></button>
        <div class="title">
            <div class="quick">
                {#each ['new', 'open', 'save', 'saveas', 'mobopen', 'mobsave', 'print'] as name}
                    <button aria-label={name}>{@render icon(name)}</button>
                {/each}
                <button aria-label="undo">{@render icon('undo')}</button><i class="caret"></i>
                <button aria-label="redo">{@render icon('redo')}</button><i class="caret"></i>
                <button aria-label="customize">{@render icon('custom')}</button>
            </div>
            <h1>Autodesk AutoCAD 2019 &nbsp;&nbsp; A6-151-152.dwg</h1>
            <div class="info">
                <i class="play"></i>
                <input class="keyword" bind:value={keyword} placeholder="Type a keyword or phrase" aria-label="Search" />
                <button aria-label="search">{@render icon('binoc')}</button>
                <button class="signin">{@render icon('person')}<span>Sign In</span><i class="caret"></i></button>
                <button aria-label="app store">{@render icon('cart')}</button>
                <button aria-label="stay connected">{@render icon('a360')}<i class="caret"></i></button>
                <button class="help" aria-label="help">{@render icon('help')}<i class="caret"></i></button>
            </div>
            <div class="window">
                {#each ['wmin', 'wmax', 'wclose'] as name}
                    <button aria-label={name}>{@render icon(name)}</button>
                {/each}
            </div>
        </div>
        <nav>
            {#each menus as menu}
                <button class:active={menu === activeMenu} on:click={() => activeMenu = menu}>{menu}</button>
            {/each}
            <button class="fold" aria-label="Minimize ribbon">{@render icon('collapse')}<i class="caret"></i></button>
        </nav>
    </header>

    <div class="ribbon">
        <section>
            <div class="tools draw">
                {@render big('line', 'Line', false)}
                {@render big('pline', 'Polyline', false)}
                {@render big('circle', 'Circle', true)}
                {@render big('arc', 'Arc', true)}
                <div class="stack">
                    {@render small('rect', '', true)}
                    {@render small('ellipse', '', true)}
                    {@render small('hatch', '', true)}
                </div>
            </div>
            {@render foot('Draw', true, false)}
        </section>
        <section>
            <div class="tools modify">
                <div class="stack">
                    {@render small('move', 'Move', false)}
                    {@render small('copy', 'Copy', false)}
                    {@render small('stretch', 'Stretch', false)}
                </div>
                <div class="stack">
                    {@render small('rotate', 'Rotate', false)}
                    {@render small('mirror', 'Mirror', false)}
                    {@render small('scale', 'Scale', false)}
                </div>
                <div class="stack">
                    {@render small('trim', 'Trim', true)}
                    {@render small('fillet', 'Fillet', true)}
                    {@render small('array', 'Array', true)}
                </div>
                <div class="stack">
                    {@render small('erase', '', false)}
                    {@render small('cube', '', false)}
                    {@render small('offset', '', false)}
                </div>
            </div>
            {@render foot('Modify', true, false)}
        </section>
        <section>
            <div class="tools annotation">
                <button class="big">
                    <span class="pic letter">A</span>
                    <span>Text</span>
                    <i class="caret"></i>
                </button>
                {@render big('dim', 'Dimension', false)}
                <div class="stack">
                    {@render small('linear', 'Linear', true)}
                    {@render small('leader', 'Leader', true)}
                    {@render small('table', 'Table', false)}
                </div>
            </div>
            {@render foot('Annotation', true, false)}
        </section>
        <section>
            <div class="tools layers">
                {@render big('layers', 'Layer Properties', false)}
                <div class="stack">
                    <div class="combo layer">
                        {@render icon('bulb')}{@render icon('sun')}{@render icon('unlock')}<i class="swatch"></i>
                        <select aria-label="Layer"><option>POLA</option></select>
                    </div>
                    <div class="strip">
                        {#each ['l1', 'l2', 'l3', 'l4'] as name}{@render small(name, '', false)}{/each}
                        {@render small('l5', 'Make Current', false)}
                    </div>
                    <div class="strip">
                        {#each ['l6', 'l7', 'l8', 'l9'] as name}{@render small(name, '', false)}{/each}
                        {@render small('l10', 'Match Layer', false)}
                    </div>
                </div>
            </div>
            {@render foot('Layers', true, false)}
        </section>
        <section>
            <div class="tools block">
                {@render big('insert', 'Insert', true)}
                <div class="stack">
                    {@render small('create', 'Create', false)}
                    {@render small('edit', 'Edit', false)}
                    {@render small('attr', 'Edit Attributes', true)}
                </div>
            </div>
            {@render foot('Block', true, false)}
        </section>
        <section>
            <div class="tools properties">
                {@render big('match', 'Match Properties', false)}
                <div class="stack">
                    {@render small('wheel', '', false)}
                    {@render small('weights', '', false)}
                    {@render small('types', '', false)}
                </div>
                <div class="stack">
                    <div class="combo color"><i class="swatch big-swatch"></i><select aria-label="Object color"><option>ByLayer</option></select></div>
                    <div class="combo"><i class="rule"></i><select aria-label="Lineweight"><option>ByLayer</option></select></div>
                    <div class="combo"><i class="rule"></i><select aria-label="Linetype"><option>BYLAYER</option></select></div>
                </div>
            </div>
            {@render foot('Properties', true, true)}
        </section>
        <section>
            <div class="tools groups">
                {@render big('group', 'Group', false)}
                <div class="stack">
                    {@render small('ungroup', '', false)}
                    {@render small('gedit', '', false)}
                    <span class="on">{@render small('gsel', '', false)}</span>
                </div>
            </div>
            {@render foot('Groups', true, false)}
        </section>
        <section>
            <div class="tools utilities">
                {@render big('measure', 'Measure', true)}
                <div class="stack">
                    {@render small('qsel', '', false)}
                    {@render small('selall', '', false)}
                    {@render small('calc', '', false)}
                </div>
            </div>
            {@render foot('Utilities', true, false)}
        </section>
        <section>
            <div class="tools clipboard">
                {@render big('paste', 'Paste', true)}
                <div class="stack">
                    {@render small('cut', '', false)}
                    {@render small('copyclip', '', false)}
                </div>
            </div>
            {@render foot('Clipboard', false, false)}
        </section>
        <section>
            <div class="tools view">
                {@render big('base', 'Base', true)}
            </div>
            {@render foot('View', true, true)}
        </section>
    </div>

    <div class="files">
        {#each files as file}
            <button class="file" class:active={file === activeFile} on:click={() => activeFile = file}>
                <svg class="shape" width="132" height="23" aria-hidden="true"><path d="M0 23C10 22 8 2 18 1H112C122 1 121 17 126 23z" /></svg>
                <span>{file}</span>
                {#if file !== 'Start'}<b>✕</b>{/if}
            </button>
        {/each}
        <button class="addfile" aria-label="New drawing">+</button>
        <button class="chev" aria-label="All drawings">
            <svg width="10" height="14" aria-hidden="true"><path fill="none" stroke="#ddd" stroke-width="2" d="M1 2l4 3 4-3M1 8l4 3 4-3" /></svg>
        </button>
    </div>

    <main>
        <svg class="model" aria-label="Model space">
            <defs>
                <pattern id="wall" width="9" height="9" patternUnits="userSpaceOnUse">
                    <rect width="9" height="9" fill="#4a302c" />
                    <path stroke="#7c443a" stroke-width="3" d="M0 9L9 0M-2 2L2 -2M7 11L11 7" />
                </pattern>
                <pattern id="slab" width="33" height="24" patternUnits="userSpaceOnUse">
                    <path fill="#8a4442" d="M3 3h3v3H3zM15 1h3v3h-3zM24 6h3v3h-3zM9 12h3v3H9zM19 15h6v3h-6zM29 19h3v3h-3zM4 19h3v3H4zM13 20h3v3h-3zM30 10h3v3h-3z" />
                </pattern>
                <pattern id="glass" width="6" height="6" patternUnits="userSpaceOnUse">
                    <path fill="#999" d="M0 0h3v3H0zM3 3h3v3H3z" />
                </pattern>
            </defs>
            <g class="sheets" transform="translate(0 -173)">
                <path stroke="#5a5e63" d="M4.500 334.500H692.500V841.500H4.500zM787.500 334.500H1475.500V841.500H787.500z" />
                <path stroke="#a8600f" d="M26.500 345.500H682.500V831.500H26.500zM809.500 345.500H1465.500V831.500H809.500z" />
            </g>
            {#each views as v}
                <g transform="translate({v.x} {v.y - 173}) scale(0.33333)" fill="none" stroke-width="3">
                    {#each v.walls as [x, y, w, h]}
                        <rect {x} {y} width={w} height={h} fill="url(#wall)" stroke="#7a2c22" />
                        <rect x={x + 5} y={y + 5} width={w - 10} height={h - 10} stroke="#5f7a28" stroke-width="2" stroke-dasharray="5 5" />
                    {/each}
                    {#each v.slabs as d}
                        <path {d} fill="url(#slab)" stroke={GREEN} />
                    {/each}
                    {#if v.y === 545}<rect x="872" y="134" width="176" height="18" fill="url(#glass)" stroke={MAG} />{/if}
                    {#each v.lines as [color, d]}
                        <path {d} stroke={color} />
                    {/each}
                    {#each v.dashes as [color, d]}
                        <path {d} stroke={color} stroke-dasharray={color === BLUE ? '9 5' : color === MOSS ? '6 4' : '14 7'} />
                    {/each}
                    {#each v.solid ?? [] as [x, y, w, h]}
                        <rect {x} {y} width={w} height={h} fill="#f57c10" />
                    {/each}
                    {#each v.tags as [x, y]}
                        <rect x={x - 21} y={y + 8} width="44" height="15" stroke={MAG} />
                    {/each}
                    {#each v.levels as [x, y]}
                        <path d="M{x - 14} {y}a14 11 0 0 0 28 0" stroke={YEL} />
                        <path d="M{x - 8} {y + 2}h16l-8 8z" fill={BLUE} />
                    {/each}
                    {#each v.ceilings as [x, y]}
                        <path d="M{x - 12} {y}a12 11 0 0 1 24 0" stroke={YEL} />
                        {#if v.y === 340 && v.x === 120}
                            <rect x={x - 20} y={y + 17} width="44" height="15" stroke={MAG} />
                            <rect x={x - 20} y={y + 36} width="44" height="15" stroke={MAG} />
                        {/if}
                    {/each}
                    {#each v.dots as [x, y]}
                        <rect x={x - 3} y={y - 3} width="6" height="6" fill={BLUE} />
                    {/each}
                    {#each v.ends as [x, y]}
                        <rect x={x - 3} y={y - 4} width="5" height="8" fill={CYAN} />
                    {/each}
                    {#each v.bubbles as [x, y]}
                        <circle cx={x} cy={y} r="20" stroke={YEL} stroke-width="4" />
                    {/each}
                    <circle cx={v.title[0]} cy={v.title[1]} r="24" stroke={BLUE} />
                    <path d="M{v.title[0] - 24} {v.title[1] + 1}h{v.title[4] + 86}" stroke={BLUE} />
                </g>
                <g class="cadtext" transform="translate({v.x} {v.y - 173})">
                    {#each v.tags as [x, y, name, code]}
                        <text class="mid" x={x / 3} y={y / 3 + 1}>{name}</text>
                        <text class="mid" x={x / 3} y={y / 3 + 6}>{code}</text>
                    {/each}
                    {#each v.notes as [x, y, note]}
                        <text class="mid" class:start={x < 60} x={x / 3} y={y / 3 + 1}>{note}</text>
                    {/each}
                    {#each v.levels as [x, y]}
                        <text class="mid" x={x / 3} y={y / 3}>+0.00</text>
                    {/each}
                    {#each v.ceilings as [x, y]}
                        <text class="mid" x={x / 3} y={y / 3 + 3}>CEILING +2.8</text>
                        {#if v.y === 340 && v.x === 120}
                            <text class="mid" x={x / 3} y={y / 3 + 9}>PF 2</text>
                            <text class="mid" x={x / 3} y={y / 3 + 15}>PF 3</text>
                        {/if}
                    {/each}
                    {#each v.bubbles as [x, y, name]}
                        <text class="bubble" x={x / 3} y={y / 3 + 3}>{name}</text>
                    {/each}
                    <text class="name mid" x={v.title[0] / 3} y={v.title[1] / 3 - 1}>{v.title[2]}</text>
                    <text class="name" x={v.title[0] / 3 + 12} y={v.title[1] / 3 - (v.y === 545 ? 7 : 1)}>{v.title[3]}</text>
                    {#if v.y === 545}<text class="name" x={v.title[0] / 3 + 12} y={v.title[1] / 3 - 1}>LANTAI 4</text>{/if}
                    <text class="mid" x={v.title[0] / 3} y={v.title[1] / 3 + 4}>A6-152</text>
                    <text x={v.title[0] / 3 + 12} y={v.title[1] / 3 + 4}>SKALA &nbsp; 1 : 20</text>
                </g>
            {/each}
            <g class="cadtext" transform="translate(0 -173)">
                {#each sections as [x, y, name, side]}
                    <path fill="#6a3432" d="M{x - 12} {y}l12 {12 * side} 12 {-12 * side}z" />
                    <circle cx={x} cy={y} r="8" fill="#222831" stroke={BLUE} />
                    <path stroke={YEL} d="M{x - 8} {y + 0.5}h16" />
                    <text class="name mid" {x} y={y - 2}>{name}</text>
                    <text class="mid" {x} y={y + 4}>A6-152</text>
                {/each}
                {#each triangles as [x, y]}
                    <path fill="none" stroke={MAG} d="M{x - 5} {y + 3}h10l-5 -7z" />
                    <circle cx={x} cy={y} r="2" stroke={YEL} fill="none" />
                {/each}
            </g>
        </svg>

        <p class="viewlabel">[−][Top][2D Wireframe]</p>
        <div class="mdi">
            <svg width="60" height="16" aria-hidden="true">
                <path fill="#fff" d="M5 9h10v4H5z" />
                <path fill="none" stroke="#fff" stroke-width="2" d="M26 6h6v6h-6zM28 3h7v7" />
                <path stroke="#fff" stroke-width="3" d="M46 4l8 9M54 4l-8 9" />
            </svg>
        </div>

        <div class="cube">
            <svg width="132" height="140" aria-label="ViewCube">
                <circle cx="66" cy="70" r="54" fill="none" stroke="#434a52" stroke-width="13" />
                <rect x="40" y="44" width="52" height="52" fill="#b1b3b5" />
                <rect x="50" y="54" width="32" height="32" fill="#a6a7a8" />
                <text class="top" x="66" y="75">TOP</text>
                <text x="66" y="21">N</text>
                <text x="10" y="78">W</text>
                <text x="122" y="78">E</text>
                <text x="66" y="134">S</text>
            </svg>
            <button class="wcs">WCS <svg width="10" height="7" aria-hidden="true"><path fill="#b8babd" stroke="#777b80" d="M1 1h8l-4 4z" /></svg></button>
        </div>

        <div class="navbar">
            <span class="dot">×</span>
            <button aria-label="Steering wheel">{@render icon('wheelnav')}</button><i class="caret dim"></i>
            <hr />
            <button aria-label="Pan">{@render icon('hand')}</button>
            <button aria-label="Zoom">{@render icon('zoomnav')}</button><i class="caret dim"></i>
            <button aria-label="Orbit">{@render icon('orbit')}</button><i class="caret dim"></i>
            <hr />
            <button aria-label="ShowMotion">{@render icon('motion')}</button>
            <span class="dot last">=</span>
        </div>

        <svg class="ucs" width="100" height="80" aria-hidden="true">
            <path fill="none" stroke="#e8eef4" d="M20.500 18v49.500M20.500 68.500H70M16.500 63.500h9v9h-9zM22 .500l6 7 6-7M28.500 8v6M74 54l13 13M87 54l-13 13" />
        </svg>

        <div class="cli">
            <p class="old">Autodesk DWG.&nbsp; This file is a TrustedDWG last saved by an Autodesk application or Autodesk licensed application.</p>
            <p>Command:</p>
            <p class="latest">Command:</p>
            <div class="entry">
                <div class="grip"><i></i><b>✕</b>{@render icon('wrench')}</div>
                <button aria-label="Recent commands">{@render icon('prompt')}<i class="caret dim"></i></button>
                <input bind:value={command} placeholder="Type a command" aria-label="Command" />
                <i class="up"></i>
            </div>
        </div>
    </main>

    <footer>
        <div class="layouts">
            <button class="layout current"><svg width="60" height="18" aria-hidden="true"><path d="M0 0C7 1 5 17 13 17H47C55 17 52 1 60 0z" /></svg><span>Model</span></button>
            <button class="layout"><svg width="68" height="18" aria-hidden="true"><path d="M0 0C7 1 5 17 13 17H55C63 17 60 1 68 0z" /></svg><span>Layout1</span></button>
            <button class="addlayout" aria-label="Add layout">+</button>
        </div>
        <div class="status">
            <div class="cell"><button class="model-btn">MODEL</button></div>
            <div class="cell"><button aria-label="grid">{@render icon('sgrid')}</button><button aria-label="snap">{@render icon('ssnap')}<i class="caret wide"></i></button></div>
            <div class="cell">
                <button class="lit" aria-label="ortho">{@render icon('sortho')}</button>
                <button aria-label="polar">{@render icon('spolar')}<i class="caret wide"></i></button>
                <button aria-label="isodraft">{@render icon('siso')}<i class="caret wide"></i></button>
            </div>
            <div class="cell">
                <button aria-label="tracking">{@render icon('strack')}</button>
                <button class="lit" aria-label="object snap">{@render icon('sosnap')}</button>
                <button class="arrow" aria-label="snap settings"><i class="caret wide"></i></button>
            </div>
            <div class="cell">
                <button class="lit" aria-label="annotation visibility">{@render icon('sann')}</button>
                <button aria-label="auto scale">{@render icon('sann2')}</button>
                <button aria-label="annotation scale">{@render icon('sann3')}</button>
                <button class="ratio">1:1<i class="caret wide"></i></button>
            </div>
            <div class="cell"><button aria-label="workspace">{@render icon('gear')}<i class="caret wide"></i></button></div>
            <div class="cell"><button aria-label="monitor">{@render icon('plus')}</button></div>
            <div class="cell"><button aria-label="isolate">{@render icon('isolate')}</button></div>
            <div class="cell"><button aria-label="performance">{@render icon('perf')}</button></div>
            <div class="cell"><button aria-label="clean screen">{@render icon('full')}</button><button aria-label="customization">{@render icon('lines')}</button></div>
        </div>
    </footer>
</div>

<style>
    :global(body) {
        margin: 0;
        background: #222831;
    }
    .app {
        display: flex;
        flex-direction: column;
        min-height: 100vh;
        font: 12px/16px "Open Sans", "Noto Sans", sans-serif;
        color: #f0f0f0;
    }
    button {
        display: flex;
        align-items: center;
        border: 0;
        padding: 0;
        background: none;
        color: inherit;
        font: inherit;
    }
    .icon {
        display: block;
        flex: none;
    }
    p, h1 {
        margin: 0;
        font: inherit;
    }
    .caret {
        flex: none;
        border: 3px solid transparent;
        border-top: 4px solid #eee;
        border-bottom: 0;
    }
    .caret.wide {
        border-width: 5px 4px 0;
    }
    .caret.dark {
        border-width: 5px 4px 0;
        border-top-color: #333;
    }
    .caret.dim {
        border-top-color: #3f454c;
    }

    header {
        display: grid;
        grid-template: 24px 21px / 41px 1fr;
        background: #535353;
        color: #dadada;
    }
    .appmenu {
        grid-row: 1 / 3;
        height: 41px;
        gap: 1px;
        border: 1px solid #222;
        background: linear-gradient(#cfcfcf, #b4b4b4 60%, #9aa0ac 75%, #cfd4e2);
    }
    .title {
        display: flex;
        background: #5f2216;
        border-bottom: 1px solid #333;
    }
    .quick {
        display: flex;
        flex: none;
        align-items: center;
        gap: 6px;
        padding: 0 4px 0 8px;
        background: #a3a3a3;
    }
    h1 {
        flex: 1;
        padding-left: 12px;
        line-height: 24px;
        text-align: center;
        color: #0c0403;
    }
    .info {
        display: flex;
        flex: none;
        align-items: center;
        box-sizing: border-box;
        width: 446px;
        background: #a3a3a3;
    }
    .play {
        margin: 0 5px;
        border: 4px solid transparent;
        border-left: 4px solid #fff;
        border-right: 0;
    }
    .keyword {
        box-sizing: border-box;
        width: 180px;
        height: 22px;
        margin-right: 3px;
        border: 1px solid #333;
        background: #747474;
        color: #eee;
        font: italic 12px "Open Sans", sans-serif;
    }
    input::placeholder {
        color: #c4c4c4;
    }
    .info button {
        gap: 4px;
        margin-right: 6px;
    }
    .info .signin {
        width: 114px;
        margin-right: 7px;
        color: #f4f4f4;
    }
    .info .signin span {
        flex: 1;
        text-align: left;
    }
    .info .help {
        margin-left: 12px;
    }
    .window {
        display: flex;
        flex: none;
        gap: 31px;
        padding: 0 18px 0 40px;
    }
    nav {
        display: flex;
        padding-left: 6px;
    }
    nav button {
        box-sizing: border-box;
        height: 21px;
        padding: 0 8px 0 7px;
        border: 1px solid transparent;
    }
    nav button.active {
        border-color: #333;
        border-bottom: 0;
        background: linear-gradient(#757575, #5b5b5b);
        color: #fff;
    }
    nav .fold {
        gap: 6px;
        padding-left: 22px;
    }

    .ribbon {
        display: grid;
        grid-template-columns: 226px 250px 189px 274px 161px 265px 68px 97px 80px 61px 1fr;
        height: 97px;
        border-top: 1px solid #333;
        border-bottom: 2px solid #858585;
        background: linear-gradient(#4d4d4d, #3c3c3c 80%, #404040);
    }
    section {
        display: flex;
        flex-direction: column;
        border-right: 1px solid #3c3c3c;
        border-left: 1px solid #6c6c6c;
        box-sizing: border-box;
        background: #5b5b5b;
    }
    .tools {
        display: flex;
        height: 78px;
        padding-top: 3px;
        box-sizing: border-box;
    }
    .foot {
        display: flex;
        align-items: center;
        justify-content: center;
        gap: 6px;
        position: relative;
        height: 19px;
        background: linear-gradient(#484848, #565656);
    }
    .launch {
        position: absolute;
        right: 4px;
    }
    .view + .foot {
        justify-content: flex-start;
        padding-left: 3px;
    }
    .big {
        flex: none;
        flex-direction: column;
        width: 44px;
        padding-top: 2px;
    }
    .big .pic {
        display: flex;
        align-items: center;
        justify-content: center;
        height: 36px;
    }
    .big .letter {
        height: 36px;
        font: 40px/36px Roboto, sans-serif;
        color: #dcdcdc;
    }
    .big .caret {
        margin-top: 3px;
    }
    .stack {
        display: flex;
        flex-direction: column;
    }
    .small {
        height: 24px;
        gap: 4px;
        white-space: nowrap;
    }
    .slot {
        display: flex;
        justify-content: center;
        width: 18px;
    }
    .small .caret {
        margin-left: 5px;
    }
    .draw .big:nth-child(3) {
        width: 52px;
    }
    .draw .big:nth-child(4) {
        width: 42px;
    }
    .draw .small {
        gap: 3px;
    }
    .modify {
        display: grid;
        grid-template-columns: 72px 69px 74px 24px;
        padding-left: 5px;
    }
    .annotation .big:nth-child(2) {
        width: 66px;
    }
    .layers .big {
        width: 62px;
    }
    .properties .big {
        width: 62px;
    }
    .strip {
        display: flex;
    }
    .strip .small {
        width: 24px;
        justify-content: center;
    }
    .strip .small:last-child {
        width: auto;
    }
    .combo {
        display: flex;
        align-items: center;
        position: relative;
        box-sizing: border-box;
        width: 181px;
        height: 22px;
        margin: 1px 0;
        border: 1px solid #303030;
        background: linear-gradient(#5f5f5f, #6d6d6d 50%, #606060);
    }
    .combo::after {
        content: "";
        position: absolute;
        right: 1px;
        border: 4px solid transparent;
        border-top: 5px solid #fff;
        border-bottom: 0;
    }
    .combo.layer {
        width: 208px;
        gap: 3px;
        padding-left: 4px;
    }
    .combo select {
        flex: 1;
        appearance: none;
        border: 0;
        background: none;
        color: #f0f0f0;
        font: inherit;
    }
    .swatch {
        width: 12px;
        height: 12px;
        margin: 0 1px;
        border: 1px solid #111;
        background: #808080;
    }
    .big-swatch {
        width: 14px;
        height: 14px;
        margin: 0 5px 0 12px;
        border-color: #aaa;
    }
    .rule {
        width: 66px;
        margin-left: 3px;
        border-top: 1px solid #fff;
    }
    .rule + select {
        padding: 0;
    }
    .block .big {
        width: 42px;
    }
    .block .small {
        gap: 3px;
    }
    .block .caret {
        margin-left: 2px;
    }
    .groups .big {
        width: 42px;
    }
    .on {
        border: 1px solid #24466c;
        margin: 0 0 0 1px;
        background: #4f81b8;
    }
    .on .small {
        height: 22px;
    }
    .utilities .big {
        width: 71px;
    }
    .clipboard .big {
        width: 54px;
    }
    .view .big {
        width: 60px;
    }

    .files {
        display: flex;
        height: 28px;
        padding: 2px 0 0 16px;
        box-sizing: border-box;
        border-bottom: 3px solid #595959;
        background: #383838;
        color: #bcbcbc;
    }
    .file {
        flex: none;
        position: relative;
        width: 123px;
        height: 23px;
        padding: 0 7px 0 16px;
        justify-content: space-between;
        box-sizing: border-box;
    }
    .file .shape {
        position: absolute;
        left: 4px;
        top: 0;
    }
    .file .shape path {
        fill: #555;
        stroke: #6a6a6a;
    }
    .file.active {
        color: #fff;
    }
    .file.active .shape path {
        fill: #7d7d7d;
    }
    .file span, .file b {
        position: relative;
    }
    .file b {
        font: bold 9px/16px "DejaVu Sans", sans-serif;
        color: #2e2e2e;
    }
    .addfile {
        justify-content: center;
        width: 22px;
        height: 20px;
        margin: 3px 0 0 13px;
        border-radius: 2px 2px 8px 8px;
        background: #555;
        font: bold 15px "Open Sans", sans-serif;
    }
    .chev {
        margin-left: 6px;
    }

    main {
        flex: 1;
        position: relative;
        border-right: 7px solid #dce6f1;
        background: #222831;
    }
    .model {
        position: absolute;
        width: 100%;
        height: 100%;
    }
    .sheets {
        fill: none;
    }
    .cadtext text {
        font: bold 3px "Liberation Sans", sans-serif;
        fill: #00ff00;
        stroke: #00ff00;
        stroke-width: 0.3;
    }
    .cadtext .mid, .cadtext .bubble {
        text-anchor: middle;
    }
    .cadtext .start {
        text-anchor: start;
    }
    .cadtext .name {
        font: 5px "Liberation Sans", sans-serif;
        fill: #1010ff;
        stroke: #1010ff;
    }
    .cadtext .bubble {
        font: 9px "Liberation Sans", sans-serif;
        fill: #1010ff;
        stroke: none;
    }
    .viewlabel {
        position: absolute;
        left: 3px;
        top: 6px;
    }
    .mdi {
        position: absolute;
        right: 6px;
        top: 7px;
    }
    .cube {
        position: absolute;
        top: 36px;
        right: 17px;
        display: flex;
        flex-direction: column;
        align-items: center;
        gap: 17px;
    }
    .cube text {
        font: bold 21px "Liberation Sans", sans-serif;
        text-anchor: middle;
        fill: #b4b5b6;
    }
    .cube .top {
        font: bold 13px "Open Sans", sans-serif;
        fill: #54585d;
    }
    .wcs {
        gap: 5px;
        height: 18px;
        padding: 0 4px;
        border-radius: 4px;
        background: #95989d;
        color: #4c5158;
        font: 11px "Liberation Sans", sans-serif;
    }
    .navbar {
        position: absolute;
        top: 235px;
        right: 4px;
        display: flex;
        flex-direction: column;
        align-items: center;
        width: 32px;
        height: 213px;
        border-radius: 4px;
        background: #5d6268;
        box-shadow: 0 0 0 1px #181c22;
    }
    .navbar button {
        margin: 5px 0;
    }
    .navbar hr {
        width: 26px;
        margin: 3px 0 0;
        border: 0;
        border-top: 1px solid #747474;
    }
    .navbar .dot {
        align-self: flex-end;
        width: 8px;
        height: 8px;
        margin: 2px;
        border-radius: 4px;
        background: #45494e;
        color: #6a6f75;
        font: 8px/8px "Liberation Sans", sans-serif;
        text-align: center;
    }
    .navbar .last {
        margin-top: auto;
    }
    .ucs {
        position: absolute;
        left: 0;
        bottom: 9px;
    }
    .cli {
        position: absolute;
        left: 25%;
        right: calc(25% - 9px);
        bottom: 0;
        display: flex;
        flex-direction: column;
        align-items: flex-start;
        gap: 5px;
        font: 12px/15px "DejaVu Sans Mono", monospace;
    }
    .cli p {
        margin-left: 58px;
        padding: 0 2px;
        border-radius: 2px;
        background: #5a5c5e;
        color: #e2e2e2;
        white-space: nowrap;
    }
    .cli .old {
        background: #4f5153;
        color: #bababa;
    }
    .cli .latest {
        margin-bottom: -2px;
        color: #fff;
    }
    .entry {
        display: flex;
        align-items: center;
        box-sizing: border-box;
        width: 100%;
        height: 27px;
        border: 1px solid #777;
        background: #bdbec0;
    }
    .grip {
        display: flex;
        align-items: center;
        gap: 7px;
        height: 25px;
        width: 52px;
        margin-right: 6px;
        background: linear-gradient(#5a5a5a, #404040);
    }
    .grip i {
        width: 5px;
        height: 18px;
        margin-left: 3px;
        border: 2px dotted #999;
        border-width: 0 2px;
        box-sizing: border-box;
    }
    .entry button {
        gap: 4px;
    }
    .entry input {
        flex: 1;
        border: 0;
        padding: 0 8px;
        background: none;
        font: italic 12px "DejaVu Sans Mono", monospace;
    }
    .entry input::placeholder {
        color: #75777a;
    }
    .up {
        margin-right: 3px;
        border: 4px solid transparent;
        border-bottom: 5px solid #222;
        border-top: 0;
    }

    footer {
        display: flex;
        justify-content: space-between;
        height: 24px;
        box-sizing: border-box;
        border-top: 1px solid #5c5c5c;
        background: #383838;
    }
    .layouts {
        display: flex;
        padding-left: 10px;
    }
    .layout {
        position: relative;
        height: 17px;
        justify-content: center;
        color: #b4b4b4;
    }
    .layout span {
        position: absolute;
    }
    .layout path {
        fill: #5a5a5a;
    }
    .current {
        color: #fff;
        font-weight: bold;
    }
    .current path {
        fill: #828282;
    }
    .addlayout {
        justify-content: center;
        width: 22px;
        height: 16px;
        border-radius: 8px 2px 8px 8px;
        background: #555;
        font: bold 15px "Open Sans", sans-serif;
    }
    .status {
        display: flex;
        padding-right: 4px;
        background: #535353;
    }
    .cell {
        display: flex;
        border-left: 2px solid #7c7c7c;
    }
    .cell button {
        gap: 6px;
        padding: 0 4px;
    }
    .cell .model-btn {
        color: #fff;
    }
    .cell .lit {
        padding: 0 3px;
        background: #6194c4;
    }
    .cell .arrow {
        padding: 0 5px;
    }
</style>
